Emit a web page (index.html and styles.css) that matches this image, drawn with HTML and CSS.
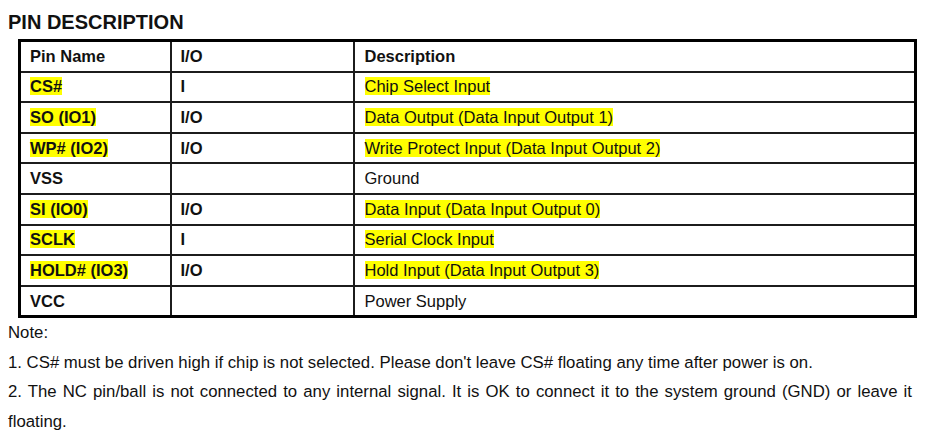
FILE: index.html
```html
<!DOCTYPE html>
<html>
<head>
<meta charset="utf-8">
<link rel="stylesheet" href="styles.css">
</head>
<body>
<h1 class="title">PIN DESCRIPTION</h1>
<table class="pins">
  <colgroup><col class="c1"><col class="c2"><col class="c3"></colgroup>
  <thead>
    <tr><th>Pin Name</th><th>I/O</th><th>Description</th></tr>
  </thead>
  <tbody>
    <tr><td class="name"><span class="hl">CS#</span></td><td class="io">I</td><td><span class="hl">Chip Select Input</span></td></tr>
    <tr><td class="name"><span class="hl">SO (IO1)</span></td><td class="io">I/O</td><td><span class="hl">Data Output (Data Input Output 1)</span></td></tr>
    <tr><td class="name"><span class="hl">WP# (IO2)</span></td><td class="io">I/O</td><td><span class="hl">Write Protect Input (Data Input Output 2)</span></td></tr>
    <tr><td class="name">VSS</td><td class="io"></td><td>Ground</td></tr>
    <tr><td class="name"><span class="hl">SI (IO0)</span></td><td class="io">I/O</td><td><span class="hl">Data Input (Data Input Output 0)</span></td></tr>
    <tr><td class="name"><span class="hl">SCLK</span></td><td class="io">I</td><td><span class="hl">Serial Clock Input</span></td></tr>
    <tr><td class="name"><span class="hl">HOLD# (IO3)</span></td><td class="io">I/O</td><td><span class="hl">Hold Input (Data Input Output 3)</span></td></tr>
    <tr><td class="name">VCC</td><td class="io"></td><td>Power Supply</td></tr>
  </tbody>
</table>
<div class="notes">
  <p>Note:</p>
  <p>1. CS# must be driven high if chip is not selected. Please don't leave CS# floating any time after power is on.</p>
  <p>2. The NC pin/ball is not connected to any internal signal. It is OK to connect it to the system ground (GND) or leave it floating.</p>
</div>
</body>
</html>
```
FILE: styles.css
```css
html, body {
  margin: 0;
  padding: 0;
  background: #fff;
}
body {
  font-family: "Liberation Sans", Arial, sans-serif;
  color: #111;
  padding: 0 0 0 8px;
}
.title {
  font-size: 20px;
  font-weight: bold;
  margin: 0;
  padding-top: 11px;
  line-height: 23px;
  height: 28px;
}
.pins {
  margin-left: 10px;
  width: 899px;
  border-collapse: collapse;
  border: 3px solid #000;
  font-size: 16.5px;
  table-layout: fixed;
}
.c1 { width: 151px; }
.c2 { width: 183px; }
.c3 { width: auto; }
.pins th, .pins td {
  border: 2px solid #1c1c1c;
  height: 28.6px;
  padding: 0 0 0 9px;
  text-align: left;
  vertical-align: middle;
  line-height: 19px;
}
.pins th {
  font-weight: bold;
  height: 28.6px;
}
.pins td.name, .pins td.io {
  font-weight: bold;
}
.pins td:nth-child(3), .pins th:nth-child(3) {
  padding-left: 10px;
}
.hl {
  background: #ffff00;
}
.notes {
  font-size: 16.75px;
  line-height: 29.5px;
  padding-top: 0;
  padding-right: 30px;
  text-align: justify;
}
.notes p {
  margin: 0;
}
```
